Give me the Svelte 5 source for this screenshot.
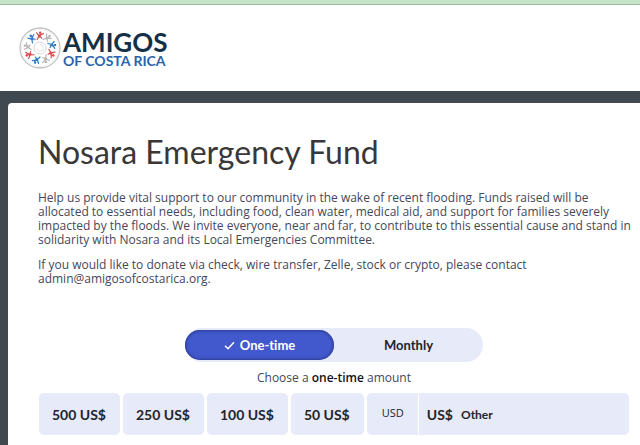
<script>
  let frequency = $state('one-time');
  let amount = $state('');
  let currency = $state('USD');
  const presets = [500, 250, 100, 50];
  const figures = [
    { angle: 0, color: '#dc4a50' },
    { angle: 38, color: '#b9b3b3' },
    { angle: 78, color: '#2e7cc4' },
    { angle: 118, color: '#dc4a50' },
    { angle: 156, color: '#b9b3b3' },
    { angle: 198, color: '#2e7cc4' },
    { angle: 240, color: '#dc4a50' },
    { angle: 278, color: '#b9b3b3' },
    { angle: 322, color: '#2e7cc4' }
  ];
</script>

<div class="page">
  <header>
    <a class="logo" href="#home" aria-label="Amigos of Costa Rica">
      <svg width="42" height="42" viewBox="0 0 42 42" aria-hidden="true">
        <circle cx="21" cy="21" r="20" fill="#fff" stroke="#c2c2c4" stroke-width="1.3" />
        <circle cx="21" cy="21" r="18.4" fill="none" stroke="#ececee" stroke-width=".7" />
        <circle cx="21" cy="21" r="6" fill="none" stroke="#d9d9dc" stroke-width="1" />
        <path d="M18 22a3.3 3.3 0 1 0 3-4.3" fill="none" stroke="#dedee1" stroke-width=".9" />
        {#each figures as f}
          <g transform={`rotate(${f.angle} 21 21)`} fill="none" stroke={f.color} stroke-linecap="round">
            <circle cx="21.2" cy="5.8" r="1.3" fill={f.color} stroke="none" />
            <path d="M17.6 5.8 19.6 8.6 24.4 6.6M20 8.8 18.2 12.4M20.8 9.4 22.6 11" stroke-width="1.2" />
            <path d="M18.8 7.8 23 7.2 20.2 11.2Z" fill={f.color} stroke="none" />
          </g>
        {/each}
      </svg>
      <span class="wordmark">
        <span class="name">AMIGOS</span>
        <span class="place">OF COSTA RICA</span>
      </span>
    </a>
  </header>

  <main>
    <section class="card">
      <h1>Nosara Emergency Fund</h1>
      <div class="intro">
        <p>
          Help us provide vital support to our community in the wake of recent flooding. Funds raised will be
          allocated to essential needs, including food, clean water, medical aid, and support for families severely
          impacted by the floods. We invite everyone, near and far, to contribute to this essential cause and stand in
          solidarity with Nosara and its Local Emergencies Committee.
        </p>
        <p>
          If you would like to donate via check, wire transfer, Zelle, stock or crypto, please contact
          admin@amigosofcostarica.org.
        </p>
      </div>

      <div class="form">
        <div class="toggle" role="group" aria-label="Donation frequency">
          <button type="button" class:active={frequency === 'one-time'} aria-pressed={frequency === 'one-time'} onclick={() => (frequency = 'one-time')}>
            {#if frequency === 'one-time'}<svg width="11" height="9" viewBox="0 0 11 9" aria-hidden="true"><path d="M1 4.8 4 7.7 10 1.2" fill="none" stroke="currentColor" stroke-width="1.5" /></svg>{/if}
            One-time
          </button>
          <button type="button" class:active={frequency === 'monthly'} aria-pressed={frequency === 'monthly'} onclick={() => (frequency = 'monthly')}>
            {#if frequency === 'monthly'}<svg width="11" height="9" viewBox="0 0 11 9" aria-hidden="true"><path d="M1 4.8 4 7.7 10 1.2" fill="none" stroke="currentColor" stroke-width="1.5" /></svg>{/if}
            Monthly
          </button>
        </div>

        <p class="choose">Choose a <strong>{frequency}</strong> amount</p>

        <div class="amounts">
          {#each presets as preset}
            <button type="button" class="preset" onclick={() => (amount = String(preset))}>{preset} US$</button>
          {/each}
          <div class="custom">
            <select aria-label="Currency" bind:value={currency}>
              <option>USD</option>
            </select>
            <div class="other">
              <label for="other-amount">US$</label>
              <input id="other-amount" type="text" inputmode="decimal" placeholder="Other" bind:value={amount} />
            </div>
          </div>
        </div>
      </div>
    </section>
  </main>
</div>

<style>
  :global(body) {
    margin: 0;
    background: #414950;
  }
  .page {
    font-family: Lato, 'Open Sans', sans-serif;
    font-variant-ligatures: none;
    color: #45475a;
    overflow: hidden;
    min-height: 100vh;
    display: flex;
    flex-direction: column;
  }
  header {
    background: #fff;
    border-top: 4px solid #c5e3c8;
    box-shadow: inset 0 1px #a3b5a4;
    padding: 23px 19px 22px;
  }
  .logo {
    display: flex;
    align-items: center;
    gap: 2px;
    text-decoration: none;
  }
  .wordmark {
    display: flex;
    flex-direction: column;
  }
  .name {
    font-size: 26px;
    line-height: 26px;
    font-weight: 700;
    color: #152f47;
  }
  .place {
    font-size: 14px;
    line-height: 12px;
    font-weight: 700;
    color: #2864ae;
  }
  main {
    flex: 1;
    display: flex;
    background: #414950;
    padding: 12px 0 0 8px;
  }
  .card {
    flex: 1;
    min-width: 0;
    background: #fff;
    border-radius: 4px 0 0 0;
    padding: 30px 4px 10px 30px;
  }
  h1 {
    margin: 0;
    font-size: 32px;
    line-height: 38px;
    font-weight: 400;
    color: #383838;
  }
  .intro {
    margin-top: 20px;
    font-family: 'Open Sans', sans-serif;
    font-size: 12px;
    line-height: 14px;
  }
  .intro p {
    margin: 0 0 11px;
  }
  .form {
    padding: 31px 7px 0 1px;
  }
  .toggle {
    display: flex;
    width: 298px;
    margin: 0 auto;
    padding: 2px 0;
    box-sizing: border-box;
    border-radius: 17px;
    background: #e7eaf8;
  }
  button,
  select,
  input {
    font-family: inherit;
    font-variant-ligatures: none;
    border: 0;
    margin: 0;
    color: #22242c;
  }
  .toggle button {
    flex: 1;
    height: 30px;
    display: flex;
    align-items: center;
    justify-content: center;
    gap: 5px;
    border-radius: 15px;
    background: transparent;
    font-size: 13px;
    font-weight: 700;
    cursor: pointer;
  }
  .toggle .active {
    background: #4259cd;
    color: #fff;
    box-shadow: inset 0 0 3px 1px #2c3b90;
  }
  .choose {
    margin: 8px 0;
    text-align: center;
    font-family: 'Open Sans', sans-serif;
    font-size: 12px;
    line-height: 15px;
  }
  .choose strong {
    font-weight: 600;
    color: #111;
  }
  .amounts {
    display: flex;
    gap: 3px;
  }
  .preset {
    height: 42px;
    padding: 0 14px 0 13px;
    border-radius: 5px;
    background: #e7eaf8;
    font-size: 14px;
    font-weight: 700;
    white-space: nowrap;
    cursor: pointer;
  }
  .custom {
    flex: 1;
    min-width: 0;
    display: flex;
    gap: 1px;
    border-radius: 5px;
    overflow: hidden;
  }
  select {
    appearance: none;
    width: 51px;
    padding: 0 0 4px 15px;
    border-radius: 0;
    background: #e7eaf8;
    font-family: 'Open Sans', sans-serif;
    font-size: 11px;
  }
  .other {
    flex: 1;
    min-width: 0;
    display: flex;
    align-items: center;
    gap: 8px;
    padding-left: 8px;
    background: #e7eaf8;
  }
  .other label {
    font-size: 14px;
    font-weight: 700;
    color: #22242c;
  }
  input {
    flex: 1;
    min-width: 0;
    padding: 0;
    background: transparent;
    font-size: 12px;
    font-weight: 700;
  }
  input::placeholder {
    color: #22242c;
    opacity: 1;
  }
</style>
